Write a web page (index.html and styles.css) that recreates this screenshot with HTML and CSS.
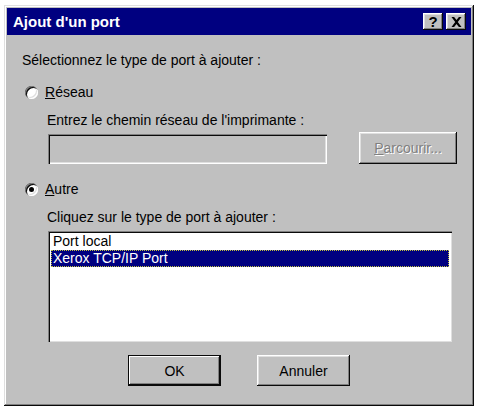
FILE: index.html
```html
<!DOCTYPE html>
<html>

<head>
  <title>Ajout d'un port</title>
  <link rel="stylesheet" href="styles.css">
</head>

<body>
  <div class="window">
    <div class="title-bar">
      <span class="title">Ajout d'un port</span>
      <div class="title-btns">
        <button class="title-btn">?</button>
        <button class="title-btn close">
          <svg width="11" height="10" viewBox="0 0 11 10">
            <path d="M0.5 0h2.6l2.4 3 2.4-3h2.6l-3.7 5 3.7 5h-2.6l-2.4-3-2.4 3h-2.6l3.7-5z" fill="black"/>
          </svg>
        </button>
      </div>
    </div>

    <div class="content">
      <p class="label">Sélectionnez le type de port à ajouter :</p>

      <div class="radio-row">
        <span class="radio"></span>
        <span><u>R</u>éseau</span>
      </div>

      <p class="label indent">Entrez le chemin réseau de l'imprimante :</p>
      <div class="path-row">
        <div class="field"></div>
        <button class="btn disabled"><u>P</u>arcourir...</button>
      </div>

      <div class="radio-row autre">
        <span class="radio checked"></span>
        <span><u>A</u>utre</span>
      </div>

      <p class="label indent">Cliquez sur le type de port à ajouter :</p>
      <div class="list">
        <div class="item">Port local</div>
        <div class="item selected">Xerox TCP/IP Port</div>
      </div>

      <div class="actions">
        <button class="btn default">OK</button>
        <button class="btn">Annuler</button>
      </div>
    </div>
  </div>
</body>

</html>
```

FILE: styles.css
```css
body{
    margin: 0;
    padding: 5px 0 0 4px;
    background-color: white;
    font-family: "Liberation Sans", Arial, sans-serif;
    font-size: 14px;
    color: black;
}
.window{
    width: 470px;
    height: 401px;
    box-sizing: border-box;
    padding: 3px;
    background-color: #c0c0c0;
    box-shadow: inset -1px -1px #0a0a0a, inset 1px 1px #dfdfdf,
                inset -2px -2px #808080, inset 2px 2px #ffffff;
    display: flex;
    flex-direction: column;
}
.title-bar{
    height: 27px;
    background-color: #000080;
    display: flex;
    align-items: center;
    justify-content: space-between;
    padding: 0 5px 0 6px;
}
.title{
    color: white;
    font-weight: bold;
    font-size: 15px;
}
.title-btns{
    display: flex;
    gap: 3px;
}
.title-btn{
    width: 20px;
    height: 17px;
    padding: 0;
    border: none;
    background-color: #c0c0c0;
    box-shadow: inset -1px -1px #0a0a0a, inset 1px 1px #ffffff,
                inset -2px -2px #808080, inset 2px 2px #dfdfdf;
    font-family: "Liberation Sans", Arial, sans-serif;
    font-weight: bold;
    font-size: 15px;
    line-height: 17px;
    display: flex;
    align-items: center;
    justify-content: center;
}
.content{
    padding: 0 0 0 15px;
    display: flex;
    flex-direction: column;
}
.label{
    margin: 17px 0 0 0;
    line-height: 16px;
}
.indent{
    margin-left: 25px;
    margin-top: 12px;
}
.radio-row{
    display: flex;
    align-items: center;
    gap: 7px;
    margin: 16px 0 0 3px;
    line-height: 16px;
}
.autre{
    margin-top: 17px;
}
.radio{
    width: 13px;
    height: 13px;
    border-radius: 50%;
    background-color: white;
    box-shadow: inset 1px 1px #808080, inset 2px 2px #0a0a0a,
                inset -1px -1px #ffffff, inset -2px -2px #dfdfdf;
    display: flex;
    align-items: center;
    justify-content: center;
}
.checked::after{
    content: "";
    width: 5px;
    height: 5px;
    border-radius: 50%;
    background-color: black;
}
.path-row{
    display: flex;
    align-items: flex-end;
    margin: 4px 0 0 26px;
}
.field{
    width: 279px;
    height: 30px;
    box-sizing: border-box;
    background-color: #c0c0c0;
    box-shadow: inset 1px 1px #808080, inset 2px 2px #0a0a0a,
                inset -1px -1px #ffffff, inset -2px -2px #dfdfdf;
}
.btn{
    width: 98px;
    height: 32px;
    border: none;
    background-color: #c0c0c0;
    box-shadow: inset -1px -1px #0a0a0a, inset 1px 1px #ffffff,
                inset -2px -2px #808080, inset 2px 2px #dfdfdf;
    font-family: "Liberation Sans", Arial, sans-serif;
    font-size: 14px;
    color: black;
    padding: 0;
}
.path-row .btn{
    margin-left: 32px;
}
.disabled{
    color: #808080;
    text-shadow: 1px 1px #ffffff;
}
.list{
    margin: 6px 0 0 26px;
    width: 404px;
    height: 111px;
    box-sizing: border-box;
    padding: 2px 3px;
    background-color: white;
    box-shadow: inset 1px 1px #808080, inset 2px 2px #0a0a0a,
                inset -1px -1px #dfdfdf, inset -2px -2px #ffffff;
}
.item{
    height: 17px;
    line-height: 17px;
    padding-left: 2px;
}
.selected{
    background-color: #000080;
    color: white;
    outline: 1px dotted #c0c040;
    outline-offset: -1px;
}
.actions{
    display: flex;
    justify-content: center;
    gap: 36px;
    margin: 13px 0 0 -15px;
}
.actions .btn{
    width: 93px;
    height: 31px;
}
.default{
    box-shadow: inset 0 0 0 1px #0a0a0a, inset -2px -2px #0a0a0a,
                inset 2px 2px #ffffff, inset -3px -3px #808080;
}
```
